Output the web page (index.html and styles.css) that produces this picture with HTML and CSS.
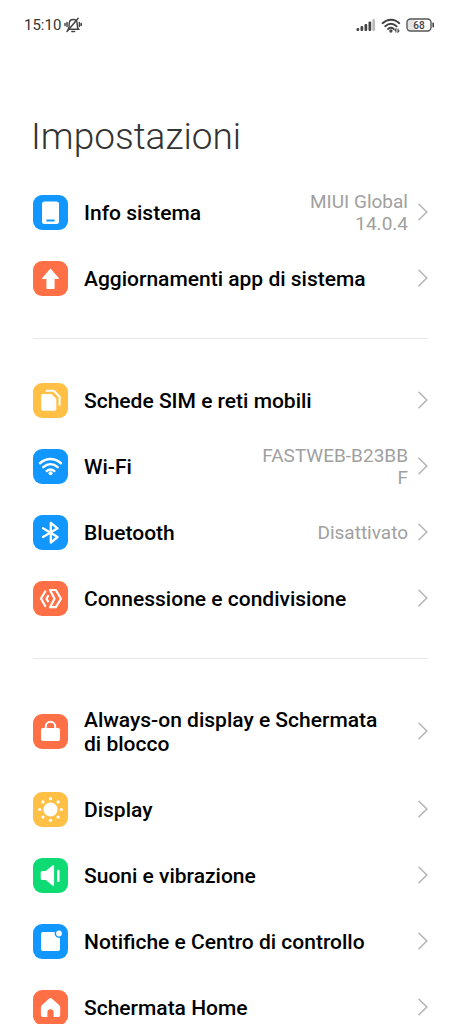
FILE: index.html
```html
<!DOCTYPE html>
<html lang="it">
<head>
<meta charset="utf-8">
<meta name="viewport" content="width=device-width, initial-scale=1">
<title>Impostazioni</title>
<link rel="stylesheet" href="styles.css">
</head>
<body>
<div class="screen">
  <header class="status">
    <div class="status-side">
      <span class="clock">15:10</span>
      <svg class="bell" width="18" height="16" viewBox="0 0 18 16" fill="none" stroke="#444" stroke-width="1.500" stroke-linecap="round" aria-hidden="true">
        <path d="M4.300 12.200h10.200c-1.200-1.200-1.300-2.400-1.300-5.200C13.200 4.300 11.600 2.600 9.200 2.600S5.200 4.300 5.200 7c0 2.800 0 4-.9 5.200z"/>
        <path d="M7.800 14.500h2.800M3 14.500 14.200 1.200M3 5.500v4M1 6.600v1.800M15.400 5.500v4M17.200 6.600v1.800"/>
      </svg>
    </div>
    <div class="status-side status-icons">
      <svg width="20" height="14" viewBox="0 0 20 14" fill="#444" aria-hidden="true">
        <rect x="0.500" y="10" width="2.700" height="3" rx="1"/><rect x="4.500" y="8" width="2.700" height="5" rx="1"/><rect x="8.500" y="6" width="2.700" height="7" rx="1"/><rect x="12.500" y="3.500" width="2.700" height="9.500" rx="1"/><rect x="16.300" y="1" width="2.700" height="12" rx="1" fill="#bbb"/>
      </svg>
      <svg width="20" height="15" viewBox="0 0 20 15" fill="none" stroke="#444" stroke-width="1.900" stroke-linecap="round" aria-hidden="true">
        <path d="M1.500 5.200C6.500.5 13.500.5 18.300 5.200M4.200 8.200c3.600-3.100 7.800-3.100 11.400 0M7 10.900c1.900-1.500 3.900-1.500 5.800 0"/>
        <circle cx="9.900" cy="13" r=".7"/>
        <path stroke-width="1.100" d="M14.900 14v-3l-1 1.200M17 11v3l1-1.200"/>
      </svg>
      <svg width="29" height="14" viewBox="0 0 29 14" role="img" aria-label="Batteria 68%">
        <rect x="2" y="2" width="8" height="10" rx="2" fill="#e4e4e4"/>
        <rect x="1" y="1" width="24" height="12" rx="3.500" fill="none" stroke="#555" stroke-width="1.400"/>
        <path d="M27.200 5.300v3.400" stroke="#444" stroke-width="1.600" stroke-linecap="round"/>
        <text class="battery-text" x="13" y="10.500" text-anchor="middle">68</text>
      </svg>
    </div>
  </header>

  <main class="content">
    <h1 class="title">Impostazioni</h1>

    <nav class="group" aria-label="Sistema">
      <a class="row" href="#info">
        <svg class="icon blue" viewBox="0 0 35 35" aria-hidden="true"><rect x="9" y="6.500" width="17" height="22.500" rx="2.500" fill="#fff"/><rect x="13.300" y="24.500" width="8.400" height="2" rx=".6" fill="#1197ff"/></svg>
        <span class="label">Info sistema</span>
        <span class="value">MIUI Global 14.0.4</span>
        <svg class="chevron" viewBox="0 0 10 18" aria-hidden="true"><path d="M1 1.200 8.800 9 1 16.800"/></svg>
      </a>
      <a class="row" href="#aggiornamenti">
        <svg class="icon orange" viewBox="0 0 35 35" aria-hidden="true"><path d="M17.500 8.300 25.300 17.500H21v9.800h-7v-9.800H9.700z" fill="#fff" stroke="#fff" stroke-width="1.200" stroke-linejoin="round"/></svg>
        <span class="label">Aggiornamenti app di sistema</span>
        <svg class="chevron" viewBox="0 0 10 18" aria-hidden="true"><path d="M1 1.200 8.800 9 1 16.800"/></svg>
      </a>
    </nav>

    <nav class="group" aria-label="Connettività">
      <a class="row" href="#sim">
        <svg class="icon yellow" viewBox="0 0 35 35" aria-hidden="true"><path d="M10 11h8.500l4.800 4.800V26q0 1.800-1.800 1.800H10q-1.800 0-1.800-1.800V12.800Q8.200 11 10 11z" fill="#fff"/><path d="M13.500 7.700h7.200l5.900 6v8.300" fill="none" stroke="#fff" stroke-width="2" stroke-linecap="round" stroke-linejoin="round"/></svg>
        <span class="label">Schede SIM e reti mobili</span>
        <svg class="chevron" viewBox="0 0 10 18" aria-hidden="true"><path d="M1 1.200 8.800 9 1 16.800"/></svg>
      </a>
      <a class="row" href="#wifi">
        <svg class="icon blue" viewBox="0 0 35 35" aria-hidden="true"><g fill="none" stroke="#fff" stroke-width="2.500" stroke-linecap="round"><path d="M7 14.200c6.300-5.600 14.700-5.600 21 0M10.300 18.100c4.400-3.700 10-3.700 14.400 0M13.700 21.900c2.500-1.900 5.100-1.900 7.600 0"/></g><circle cx="17.500" cy="24.300" r="2" fill="#fff"/></svg>
        <span class="label">Wi-Fi</span>
        <span class="value value-network">FASTWEB-B23BBF</span>
        <svg class="chevron" viewBox="0 0 10 18" aria-hidden="true"><path d="M1 1.200 8.800 9 1 16.800"/></svg>
      </a>
      <a class="row" href="#bluetooth">
        <svg class="icon blue" viewBox="0 0 35 35" aria-hidden="true"><path d="M10 13.200 24.600 22l-6.800 5.500V7.800l6.800 5.500L10 22" fill="none" stroke="#fff" stroke-width="2.300" stroke-linecap="round" stroke-linejoin="round"/></svg>
        <span class="label">Bluetooth</span>
        <span class="value">Disattivato</span>
        <svg class="chevron" viewBox="0 0 10 18" aria-hidden="true"><path d="M1 1.200 8.800 9 1 16.800"/></svg>
      </a>
      <a class="row" href="#condivisione">
        <svg class="icon orange" viewBox="0 0 35 35" aria-hidden="true"><g fill="none" stroke="#fff" stroke-width="2.200" stroke-linecap="round" stroke-linejoin="round"><path d="M12.200 10.500 8 17.500l4.200 7.500M15 15l-1.500 2.700 1.500 2.700M17 9h5.800l5.200 8.700-5.200 8.500H17l4.500-8.500z"/></g></svg>
        <span class="label">Connessione e condivisione</span>
        <svg class="chevron" viewBox="0 0 10 18" aria-hidden="true"><path d="M1 1.200 8.800 9 1 16.800"/></svg>
      </a>
    </nav>

    <nav class="group" aria-label="Personalizzazione">
      <a class="row" href="#blocco">
        <svg class="icon orange" viewBox="0 0 35 35" aria-hidden="true"><rect x="8" y="14" width="19" height="13" rx="2" fill="#fff"/><path d="M12.800 15v-2.500a4.700 4.700 0 0 1 9.400 0V15" fill="none" stroke="#fff" stroke-width="2"/></svg>
        <span class="label">Always-on display e Schermata di blocco</span>
        <svg class="chevron" viewBox="0 0 10 18" aria-hidden="true"><path d="M1 1.200 8.800 9 1 16.800"/></svg>
      </a>
      <a class="row" href="#display">
        <svg class="icon yellow" viewBox="0 0 35 35" aria-hidden="true"><g fill="#fff"><circle cx="17.500" cy="17.500" r="7"/><circle cx="17.500" cy="6.700" r="1.600"/><circle cx="25.100" cy="9.900" r="1.600"/><circle cx="28.300" cy="17.500" r="1.600"/><circle cx="25.100" cy="25.100" r="1.600"/><circle cx="17.500" cy="28.300" r="1.600"/><circle cx="9.900" cy="25.100" r="1.600"/><circle cx="6.700" cy="17.500" r="1.600"/><circle cx="9.900" cy="9.900" r="1.600"/></g></svg>
        <span class="label">Display</span>
        <svg class="chevron" viewBox="0 0 10 18" aria-hidden="true"><path d="M1 1.200 8.800 9 1 16.800"/></svg>
      </a>
      <a class="row" href="#suoni">
        <svg class="icon green" viewBox="0 0 35 35" aria-hidden="true"><path d="M9.300 13h3.500l6.300-5.300q2-1.300 2 .8v18q0 2.100-2 .8L12.800 22H9.300q-1.600 0-1.600-1.600v-5.800Q7.700 13 9.300 13z" fill="#fff"/><path d="M25.300 13v9.800" stroke="#fff" stroke-width="2.500" stroke-linecap="round"/></svg>
        <span class="label">Suoni e vibrazione</span>
        <svg class="chevron" viewBox="0 0 10 18" aria-hidden="true"><path d="M1 1.200 8.800 9 1 16.800"/></svg>
      </a>
      <a class="row" href="#notifiche">
        <svg class="icon blue" viewBox="0 0 35 35" aria-hidden="true"><rect x="8" y="8" width="19" height="19" rx="2" fill="#fff"/><circle cx="26" cy="9.500" r="4.400" fill="#1197ff"/><circle cx="26" cy="9.500" r="2.900" fill="#fff"/></svg>
        <span class="label">Notifiche e Centro di controllo</span>
        <svg class="chevron" viewBox="0 0 10 18" aria-hidden="true"><path d="M1 1.200 8.800 9 1 16.800"/></svg>
      </a>
      <a class="row" href="#home">
        <svg class="icon orange" viewBox="0 0 35 35" aria-hidden="true"><path d="M16.200 8.500q1.300-1.200 2.600 0l7.500 6.700q.9.800.9 1.900v8.100q0 1.800-1.800 1.800h-4.800v-4.700a3.100 3.100 0 0 0-6.200 0V27H9.700q-1.800 0-1.800-1.800v-8.100q0-1.100.9-1.900z" fill="#fff"/></svg>
        <span class="label">Schermata Home</span>
        <svg class="chevron" viewBox="0 0 10 18" aria-hidden="true"><path d="M1 1.200 8.800 9 1 16.800"/></svg>
      </a>
    </nav>
  </main>
</div>
</body>
</html>
```
FILE: styles.css
```css
* { box-sizing: border-box; }

body {
  margin: 0;
  background: #fff;
  color: #000;
  font-family: Roboto, "Liberation Sans", sans-serif;
}

.screen {
  height: 100vh;
  overflow: hidden;
}

.status {
  display: flex;
  align-items: center;
  justify-content: space-between;
  height: 50px;
  padding: 0 26px 0 24px;
}

.status-side {
  display: flex;
  align-items: center;
  gap: 3px;
}

.status-icons { gap: 5px; }

.clock {
  color: #333;
  font-size: 15px;
  font-weight: 400;
}

.battery-text {
  fill: #444;
  font-size: 10px;
  font-weight: 500;
}

.content { padding: 63px 33px 0; }

.title {
  margin: 0 0 18px;
  margin-left: -2px;
  color: #333;
  font-size: 37px;
  font-weight: 300;
  line-height: 48px;
}

.group + .group {
  margin-top: 27px;
  padding-top: 28px;
  border-top: 1px solid #e6e6e6;
}

.group:last-child { padding-top: 27px; }

.row {
  display: flex;
  align-items: center;
  min-height: 66px;
  padding: 20px 0;
  color: inherit;
  text-decoration: none;
}

.icon {
  flex: none;
  width: 35px;
  height: 35px;
  margin: -6px 16px -6px 0;
  border-radius: 9px;
}

.blue { background: #1197ff; }
.orange { background: #ff7046; }
.yellow { background: #ffc045; }
.green { background: #0edb74; }

.label {
  flex: 1;
  padding: 2px 24px 0 0;
  font-size: 21px;
  font-weight: 500;
  line-height: 24px;
}

.value {
  max-width: 148px;
  margin: -12px 0;
  padding-top: 2px;
  color: #a0a0a0;
  font-size: 19px;
  line-height: 22px;
  text-align: right;
}

.value-network { word-break: break-all; }

.chevron {
  flex: none;
  width: 10px;
  height: 18px;
  margin-left: 10px;
  fill: none;
  stroke: #b4b4b4;
  stroke-width: 1.5;
  stroke-linecap: round;
}
```
